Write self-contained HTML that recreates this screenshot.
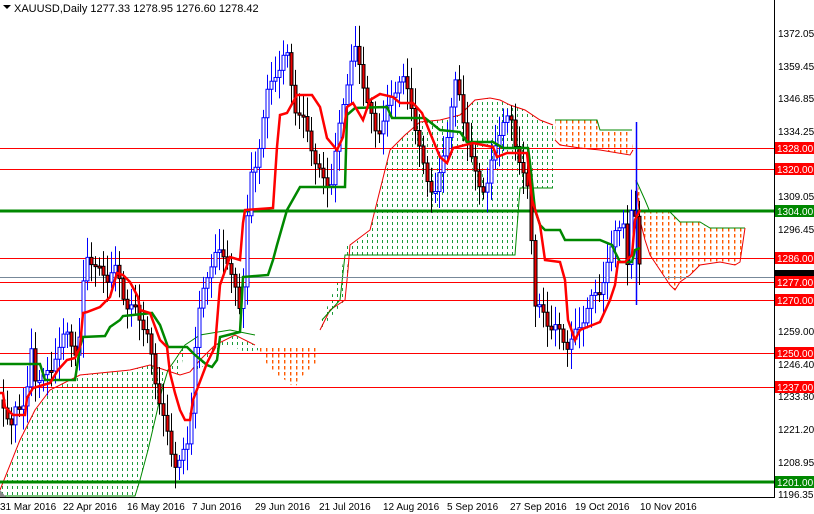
<!DOCTYPE html>
<html><head><meta charset="utf-8"><style>
body{margin:0;background:#fff;width:814px;height:514px;overflow:hidden;font-family:"Liberation Sans",sans-serif}
svg{position:absolute;left:0;top:0}
.t{font-family:"Liberation Sans",sans-serif;font-size:10px}
</style></head><body>
<svg id="s" width="814" height="514" xmlns="http://www.w3.org/2000/svg">
<defs>
<pattern id="pg" width="5" height="6" patternUnits="userSpaceOnUse"><rect x="2" y="0" width="1" height="3" fill="#1a9a3a"/></pattern>
<pattern id="po" width="6" height="6" patternUnits="userSpaceOnUse"><rect x="2" y="0" width="1.4" height="3.5" fill="#ff5a00"/></pattern>
</defs>
<g stroke-width="1">
<polygon fill="url(#pg)" stroke="none" points="0,490 20,440 35,410 50,390 80,375 110,372 130,370 150,365 165,370 180,375 185,345 175,360 168,370 162,390 155,420 148,450 140,480 135,496 0,496"/>
<polyline fill="none" stroke="#e00" points="0,490 20,440 35,410 50,390 80,375 110,372 130,370 150,365 165,370 180,375 190,372 200,360 215,345 235,335 255,345"/>
<polyline fill="none" stroke="#080" points="0,496 135,496 140,480 148,450 155,420 162,390 168,370 175,360 185,345 200,335 230,330 255,335"/>
<polygon fill="url(#pg)" points="190,372 200,360 215,345 235,335 255,345 260,350 245,352 230,345 215,350 200,370"/>
<polygon fill="url(#po)" points="258,348 320,348 315,365 300,378 295,388 285,380 270,370 262,355"/>
<polygon fill="url(#pg)" points="320,330 345,300 348,270 345,245 360,240 370,230 380,190 385,170 390,150 405,135 420,122 440,120 460,115 475,100 490,98 500,100 510,105 525,110 540,120 553,125 553,188 520,188 515,255 345,255 340,275 330,300 322,320"/>
<polyline fill="none" stroke="#e00" points="320,330 330,310 345,300 348,270 350,245 370,230 380,190 385,170 390,150 405,135 420,122 440,120 460,115 475,100 490,98 500,100 510,105 525,110 540,120 553,125"/>
<polyline fill="none" stroke="#080" points="322,320 340,300 345,255 515,255 520,188 553,188"/>
<polygon fill="url(#po)" points="555,120 597,120 600,130 630,130 633,150 630,155 600,150 580,148 560,145 555,140"/>
<polyline fill="none" stroke="#080" points="555,120 597,120 600,130 632,130"/>
<polyline fill="none" stroke="#e00" points="555,140 560,145 580,148 600,150 630,155 633,150"/>
<polygon fill="url(#po)" points="636,180 645,210 650,212 670,212 680,222 700,222 710,228 745,228 740,262 735,265 720,262 700,265 690,275 680,282 675,290 670,285 660,270 650,255 645,240 640,220"/>
<polyline fill="none" stroke="#080" points="636,180 645,200 650,212 670,212 680,222 700,222 710,228 745,228"/>
<polyline fill="none" stroke="#e00" points="745,228 740,262 735,265 720,262 700,265 690,275 680,282 675,290 670,285 660,270 650,255 645,240 640,220 636,180"/>
</g>
<g stroke="#f00" stroke-width="1">
<line x1="0" x2="774" y1="148.5" y2="148.5"/><line x1="0" x2="774" y1="169.5" y2="169.5"/>
<line x1="0" x2="774" y1="258.5" y2="258.5"/><line x1="0" x2="774" y1="282.5" y2="282.5"/>
<line x1="0" x2="774" y1="300.5" y2="300.5"/><line x1="0" x2="774" y1="353.5" y2="353.5"/>
<line x1="0" x2="774" y1="387.5" y2="387.5"/>
</g>
<line x1="0" x2="774" y1="277.5" y2="277.5" stroke="#789"/>
<line x1="0" x2="774" y1="211" y2="211" stroke="#080" stroke-width="3"/>
<line x1="0" x2="774" y1="482" y2="482" stroke="#080" stroke-width="3"/>
<g id="c"></g>
<polyline fill="none" stroke="#080" stroke-width="2.5" points="0,364 40,364 45,380 75,380 80,347 83,337 105,336 110,327 120,320 123,316 152,313 160,325 168,347 187,347 195,355 207,365 212,367 217,360 220,337 240,332 243,277 268,275 273,260 277,245 287,210 300,187 345,187 347,115 355,108 387,107 392,118 425,118 440,130 460,132 467,142 493,142 503,148 528,148 530,163 535,210 540,225 545,230 560,230 565,240 600,240 612,245 615,252 620,262 632,262 635,250 640,248"/>
<polyline fill="none" stroke="#f00" stroke-width="2.5" points="0,393 3,393 5,407 13,415 25,415 27,398 33,388 50,383 58,370 67,360 75,358 80,347 83,313 87,312 100,307 110,297 117,273 123,275 130,282 138,297 140,310 150,313 160,340 167,347 170,373 175,393 180,410 185,420 190,420 193,400 207,363 215,347 218,310 220,285 230,257 240,260 243,223 245,210 273,208 277,147 280,115 287,113 297,95 312,95 320,107 327,138 337,150 343,137 347,107 353,103 363,120 370,100 380,94 393,97 400,103 413,103 422,113 433,140 440,157 447,163 453,148 473,143 493,147 497,157 507,153 527,153 532,200 540,225 545,260 560,262 565,280 568,320 575,340 580,330 600,322 610,300 615,285 618,262 625,262 632,255 635,220 640,210"/>
<rect x="774" y="0" width="40" height="514" fill="#fff"/>
<rect x="0" y="498" width="774" height="16" fill="#fff"/>
<line x1="774.5" y1="0" x2="774.5" y2="498" stroke="#000"/>
<line x1="0" y1="497.5" x2="774" y2="497.5" stroke="#000"/>
<g class="t" fill="#000">
<text x="778" y="37">1372.05</text><text x="778" y="70">1359.45</text><text x="778" y="102">1346.85</text>
<text x="778" y="135">1334.25</text><text x="778" y="200">1309.05</text><text x="778" y="233">1296.45</text>
<text x="778" y="335">1259.00</text><text x="778" y="368">1246.40</text><text x="778" y="400">1233.80</text>
<text x="778" y="433">1221.20</text><text x="778" y="466">1208.95</text><text x="778" y="498">1196.35</text>
</g>
<g class="t" fill="#fff">
<rect x="775" y="142" width="39" height="12" fill="#f00"/><text x="777" y="152">1328.00</text>
<rect x="775" y="163" width="39" height="12" fill="#f00"/><text x="777" y="173">1320.00</text>
<rect x="775" y="205" width="39" height="12" fill="#080"/><text x="777" y="215">1304.00</text>
<rect x="775" y="252" width="39" height="12" fill="#f00"/><text x="777" y="262">1286.00</text>
<rect x="775" y="270" width="39" height="6" fill="#000"/>
<rect x="775" y="276" width="39" height="12" fill="#f00"/><text x="777" y="286">1277.00</text>
<rect x="775" y="294" width="39" height="12" fill="#f00"/><text x="777" y="304">1270.00</text>
<rect x="775" y="347" width="39" height="12" fill="#f00"/><text x="777" y="357">1250.00</text>
<rect x="775" y="381" width="39" height="12" fill="#f00"/><text x="777" y="391">1237.00</text>
<rect x="775" y="476" width="39" height="12" fill="#080"/><text x="777" y="486">1201.00</text>
</g>
<g class="t" fill="#000">
<text x="0" y="510">31 Mar 2016</text><text x="63" y="510">22 Apr 2016</text><text x="127" y="510">16 May 2016</text>
<text x="192" y="510">7 Jun 2016</text><text x="255" y="510">29 Jun 2016</text><text x="319" y="510">21 Jul 2016</text>
<text x="383" y="510">12 Aug 2016</text><text x="447" y="510">5 Sep 2016</text><text x="510" y="510">27 Sep 2016</text>
<text x="575" y="510">19 Oct 2016</text><text x="640" y="510">10 Nov 2016</text>
<text x="14" y="12" style="font-size:11px">XAUUSD,Daily  1277.33 1278.95 1276.60 1278.42</text>
</g>
<polygon points="3,5 11,5 7,9" fill="#000"/>
<polygon points="0,490 6,497 0,497" fill="#888"/>
</svg>
<script>
(function(){
var k=[[0,400],[5,420],[10,440],[15,420],[20,415],[27,380],[30,345],[33,370],[40,360],[45,370],[50,375],[55,360],[60,355],[65,345],[75,350],[80,320],[83,250],[87,240],[95,265],[105,290],[115,280],[125,300],[135,295],[145,330],[155,400],[165,440],[172,460],[180,445],[188,430],[195,330],[205,290],[215,260],[225,245],[232,270],[240,310],[248,190],[255,180],[265,100],[275,60],[285,40],[295,120],[305,140],[315,170],[330,170],[340,110],[355,60],[365,100],[375,120],[390,100],[400,90],[410,110],[420,150],[435,190],[445,150],[455,90],[470,150],[485,190],[495,150],[510,120],[520,160],[528,180],[533,300],[540,320],[548,340],[556,335],[566,335],[575,320],[590,310],[600,300],[608,260],[615,210],[622,215],[627,270],[632,160],[636,270],[640,280]];
function yat(x){for(var i=1;i<k.length;i++){if(x<=k[i][0]){var a=k[i-1],b=k[i];return a[1]+(b[1]-a[1])*(x-a[0])/(b[0]-a[0]);}}return 280;}
var g=document.getElementById('c'),ns='http://www.w3.org/2000/svg',prev=yat(0);
function el(n,at){var e=document.createElementNS(ns,n);for(var a in at)e.setAttribute(a,at[a]);g.appendChild(e);}
for(var x=2;x<=640;x+=4){var c=yat(x)+Math.sin(x*1.7)*13+Math.sin(x*0.37)*5;var o=prev;var t0=Math.min(o,c),b0=Math.max(o,c);if(b0-t0<2)b0=t0+2;
var up=c<o;var wt=t0-5-Math.abs(Math.sin(x*0.9))*16,wb=b0+5+Math.abs(Math.cos(x*1.3))*16;
el('line',{x1:x+1.5,x2:x+1.5,y1:wt,y2:wb,stroke:up?'#00f':'#000','stroke-width':1});
el('rect',{x:x,y:t0,width:3,height:b0-t0,fill:up?'#fff':'#e00',stroke:up?'#00f':'#000','stroke-width':1});prev=c;}
el('line',{x1:636.5,x2:636.5,y1:122,y2:305,stroke:'#00f','stroke-width':1.5});
})();
</script>
</body></html>
